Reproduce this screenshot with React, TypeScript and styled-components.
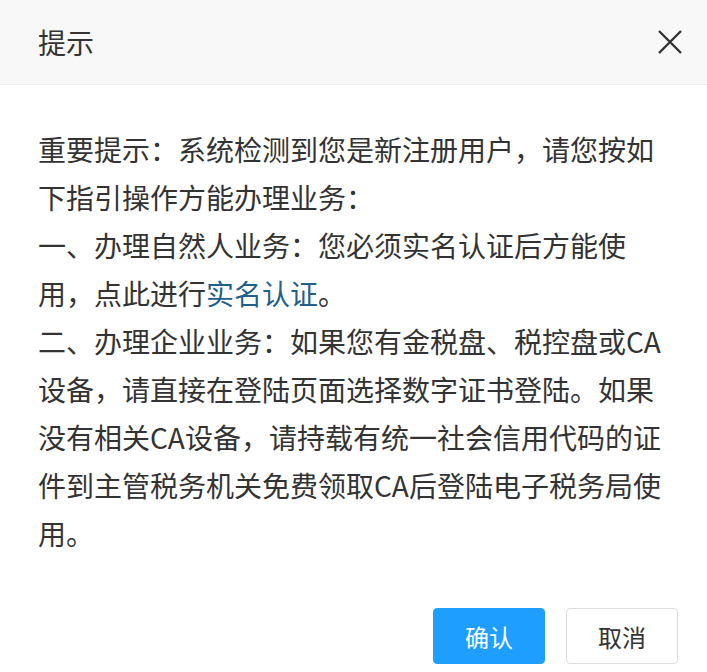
import styled, { createGlobalStyle } from "styled-components";

const GlobalStyle = createGlobalStyle`
  html, body {
    margin: 0;
    padding: 0;
    background: #ffffff;
  }
  body {
    font-family: "Noto Sans CJK SC", "Noto Sans", "Liberation Sans", sans-serif;
    color: #333333;
  }
`;

export default function App() {
  return (
    <>
      <GlobalStyle />
      <SDialog>
        <STitleBar>
          <STitle>提示</STitle>
          <SClose aria-label="关闭">
            <svg width="26" height="26" viewBox="0 0 26 26">
              <path d="M2 2 L24 24 M24 2 L2 24" stroke="#333" strokeWidth="2.4" fill="none" />
            </svg>
          </SClose>
        </STitleBar>
        <SBody>
          重要提示：系统检测到您是新注册用户，请您按如下指引操作方能办理业务：
          <br />
          一、办理自然人业务：您必须实名认证后方能使用，点此进行
          <SLink href="#">实名认证</SLink>。
          <br />
          二、办理企业业务：如果您有金税盘、税控盘或CA设备，请直接在登陆页面选择数字证书登陆。如果没有相关CA设备，请持载有统一社会信用代码的证件到主管税务机关免费领取CA后登陆电子税务局使用。
        </SBody>
        <SFooter>
          <SButton $primary>确认</SButton>
          <SButton>取消</SButton>
        </SFooter>
      </SDialog>
    </>
  );
}

const SDialog = styled.div`
  width: 707px;
  display: flex;
  flex-direction: column;
`;

const STitleBar = styled.div`
  height: 84px;
  display: flex;
  align-items: center;
  justify-content: space-between;
  padding: 0 24px 0 38px;
  background-color: #f8f8f8;
  border-bottom: 1px solid #eeeeee;
`;

const STitle = styled.span`
  font-size: 28px;
  color: #333333;
`;

const SClose = styled.button`
  width: 26px;
  height: 26px;
  padding: 0;
  border: none;
  background: transparent;
  display: flex;
  align-items: center;
  justify-content: center;
  cursor: pointer;
`;

const SBody = styled.div`
  padding: 40px 38px;
  font-size: 28px;
  line-height: 48px;
  color: #333333;
  word-break: break-all;
`;

const SLink = styled.a`
  color: #1f5f8b;
  text-decoration: none;
`;

const SFooter = styled.div`
  display: flex;
  justify-content: flex-end;
  gap: 21px;
  padding: 11px 29px 0;
`;

const SButton = styled.button<{ $primary?: boolean }>`
  width: 112px;
  height: 56px;
  padding: 0;
  border-radius: 4px;
  font-family: inherit;
  font-size: 24px;
  cursor: pointer;
  border: 1px solid ${(p) => (p.$primary ? "#1e9fff" : "#dedede")};
  background-color: ${(p) => (p.$primary ? "#1e9fff" : "#ffffff")};
  color: ${(p) => (p.$primary ? "#ffffff" : "#333333")};
`;
